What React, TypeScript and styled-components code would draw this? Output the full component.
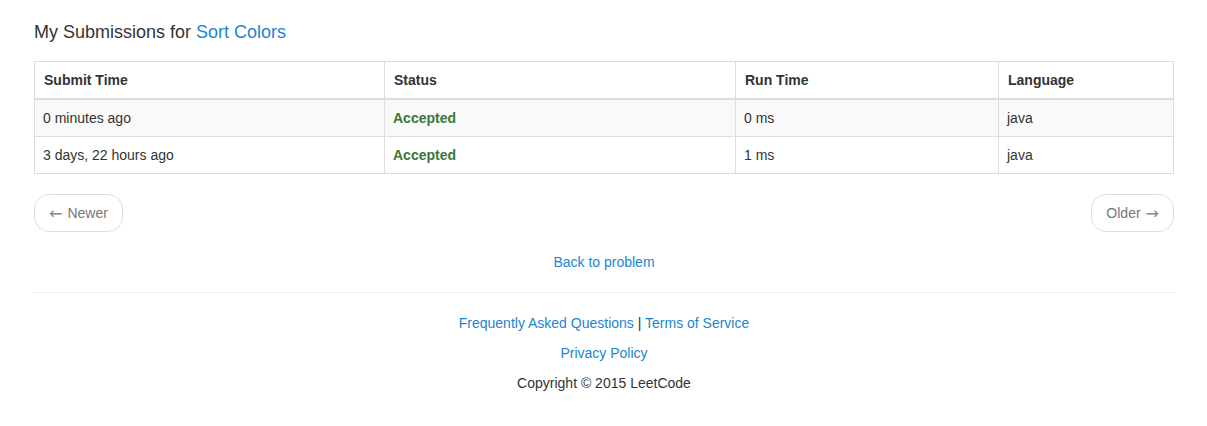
import React from "react";
import styled, { createGlobalStyle } from "styled-components";

const Global = createGlobalStyle`
  html, body { margin: 0; padding: 0; background: #fff; }
  body {
    font-family: "Liberation Sans", Arial, Helvetica, sans-serif;
    font-size: 14px;
    line-height: 1.42857;
    color: #333;
  }
  * { box-sizing: border-box; }
`;

const Container = styled.div`
  width: 1140px;
  margin-left: 34px;
  padding-top: 20px;
`;

const Title = styled.h3`
  margin: 0 0 17px 0;
  font-size: 18px;
  font-weight: 400;
  line-height: 24px;
  color: #333;
`;

const Link = styled.a`
  color: #2185d0;
  text-decoration: none;
`;

const Table = styled.table`
  width: 100%;
  border-collapse: collapse;
  border: 1px solid #ddd;
`;

const Th = styled.th<{ $w: number }>`
  width: ${(p) => p.$w}px;
  text-align: left;
  font-weight: 700;
  padding: 8px 9px;
  line-height: 20px;
  border: 1px solid #ddd;
  border-bottom: 2px solid #ddd;
  color: #333;
`;

const Tr = styled.tr<{ $striped?: boolean }>`
  background: ${(p) => (p.$striped ? "#f9f9f9" : "#fff")};
`;

const Td = styled.td`
  padding: 8px 8px;
  line-height: 20px;
  border: 1px solid #ddd;
`;

const Accepted = styled.strong`
  color: #3c763d;
  font-weight: 700;
`;

const Pager = styled.div`
  display: flex;
  justify-content: space-between;
  margin-top: 20px;
`;

const PagerButton = styled.a`
  display: inline-flex;
  align-items: center;
  gap: 5px;
  padding: 8px 14px;
  height: 38px;
  line-height: 20px;
  border: 1px solid #ddd;
  border-radius: 15px;
  color: #777;
  background: #fff;
  text-decoration: none;
`;

const Arrow = styled.span`
  font-family: "DejaVu Sans", sans-serif;
  font-size: 16px;
  line-height: 20px;
  color: #888;
  position: relative;
  top: 1px;
`;

const Centered = styled.div`
  text-align: center;
  line-height: 20px;
`;

const BackRow = styled(Centered)`
  margin-top: 20px;
`;

const Rule = styled.hr`
  margin: 20px 0 0 0;
  border: 0;
  border-top: 1px solid #eee;
`;

const Footer = styled.div`
  display: flex;
  flex-direction: column;
  gap: 10px;
  padding-top: 20px;
  text-align: center;
  line-height: 20px;
`;

export default function App() {
  const rows = [
    { time: "0 minutes ago", status: "Accepted", run: "0 ms", lang: "java" },
    { time: "3 days, 22 hours ago", status: "Accepted", run: "1 ms", lang: "java" },
  ];
  return (
    <>
      <Global />
      <Container>
        <Title>
          My Submissions for <Link href="#">Sort Colors</Link>
        </Title>
        <Table>
          <thead>
            <tr>
              <Th $w={350}>Submit Time</Th>
              <Th $w={351}>Status</Th>
              <Th $w={263}>Run Time</Th>
              <Th $w={175}>Language</Th>
            </tr>
          </thead>
          <tbody>
            {rows.map((r, i) => (
              <Tr key={i} $striped={i % 2 === 0}>
                <Td>{r.time}</Td>
                <Td>
                  <Accepted>{r.status}</Accepted>
                </Td>
                <Td>{r.run}</Td>
                <Td>{r.lang}</Td>
              </Tr>
            ))}
          </tbody>
        </Table>
        <Pager>
          <PagerButton href="#">
            <Arrow>←</Arrow>
            <span>Newer</span>
          </PagerButton>
          <PagerButton href="#">
            <span>Older</span>
            <Arrow>→</Arrow>
          </PagerButton>
        </Pager>
        <BackRow>
          <Link href="#">Back to problem</Link>
        </BackRow>
        <Rule />
        <Footer>
          <div>
            <Link href="#">Frequently Asked Questions</Link> |{" "}
            <Link href="#">Terms of Service</Link>
          </div>
          <div>
            <Link href="#">Privacy Policy</Link>
          </div>
          <div>Copyright © 2015 LeetCode</div>
        </Footer>
      </Container>
    </>
  );
}
